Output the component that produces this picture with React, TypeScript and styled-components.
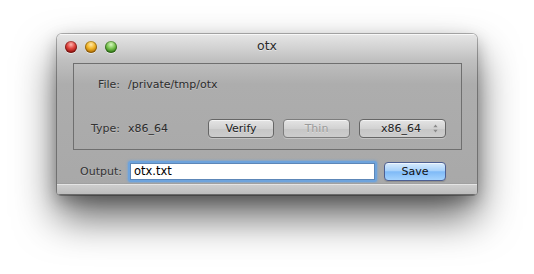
import styled, { createGlobalStyle } from "styled-components";

const GlobalStyle = createGlobalStyle`
  html, body {
    margin: 0;
    padding: 0;
    background: #ffffff;
  }
  body {
    font-family: "DejaVu Sans", "Liberation Sans", sans-serif;
    font-size: 11px;
  }
  * {
    box-sizing: border-box;
  }
`;

const Page = styled.div`
  padding: 34px 0 0 57px;
  height: 274px;
`;

const Window = styled.div`
  width: 420px;
  height: 161px;
  display: flex;
  flex-direction: column;
  border-radius: 5px 5px 4px 4px;
  overflow: hidden;
  background: linear-gradient(
    to bottom,
    #e6e6e6 0px,
    #d2d2d2 14px,
    #c0c0c0 26px,
    #adadad 50px,
    #a8a8a8 100%
  );
  box-shadow: 0 0 0 1px rgba(0, 0, 0, 0.28), 0 22px 42px rgba(0, 0, 0, 0.62),
    0 6px 16px rgba(0, 0, 0, 0.25);
`;

const TitleBar = styled.div`
  height: 24px;
  flex-shrink: 0;
  display: flex;
  align-items: center;
  position: relative;
  padding-left: 8px;
  gap: 8px;
  box-shadow: inset 0 1px 0 rgba(255, 255, 255, 0.7);
`;

const Light = styled.span<{ $base: string; $dark: string; $hi: string }>`
  width: 12px;
  height: 12px;
  border-radius: 50%;
  margin-top: 1px;
  background: radial-gradient(
    circle at 50% 30%,
    ${(p) => p.$hi} 0px,
    ${(p) => p.$base} 4px,
    ${(p) => p.$dark} 7px
  );
  box-shadow: inset 0 0 0 1px rgba(0, 0, 0, 0.28), 0 1px 0 rgba(255, 255, 255, 0.5);
`;

const Title = styled.div`
  position: absolute;
  left: 0;
  right: 0;
  top: 4px;
  text-align: center;
  font-size: 12.5px;
  color: #2a2a2a;
  text-shadow: 0 1px 0 rgba(255, 255, 255, 0.5);
  pointer-events: none;
`;

const Body = styled.div`
  flex: 1;
  padding: 5px 15px 0 16px;
`;

const GroupBox = styled.div`
  height: 87px;
  border: 1px solid #6f6f6f;
  padding: 11px 15px 0 0;
  display: flex;
  flex-direction: column;
`;

const Row = styled.div<{ $top?: number }>`
  display: flex;
  align-items: center;
  height: 18px;
  margin-top: ${(p) => p.$top ?? 0}px;
`;

const Label = styled.span<{ $w: number }>`
  width: ${(p) => p.$w}px;
  text-align: right;
  color: #333;
  flex-shrink: 0;
  text-shadow: 0 1px 0 rgba(255, 255, 255, 0.25);
`;

const Value = styled.span`
  margin-left: 8px;
  color: #2c2c2c;
  text-shadow: 0 1px 0 rgba(255, 255, 255, 0.25);
`;

const Buttons = styled.div`
  margin-left: auto;
  display: flex;
  gap: 9px;
`;

const Button = styled.button<{ $w: number; $disabled?: boolean }>`
  width: ${(p) => p.$w}px;
  height: 19px;
  padding: 0;
  border-radius: 4px;
  font-family: "DejaVu Sans", "Liberation Sans", sans-serif;
  font-size: 11px;
  color: ${(p) => (p.$disabled ? "#9a9a9a" : "#222")};
  border: 1px solid ${(p) => (p.$disabled ? "#7d7d7d" : "#666")};
  background: linear-gradient(to bottom, #e4e4e4 0%, #d2d2d2 50%, #c6c6c6 51%, #cdcdcd 100%);
  box-shadow: inset 0 1px 0 rgba(255, 255, 255, 0.6), 0 1px 0 rgba(255, 255, 255, 0.3);
  text-shadow: 0 1px 0 rgba(255, 255, 255, 0.4);
`;

const PopUp = styled(Button)`
  display: flex;
  align-items: center;
  justify-content: flex-end;
  padding-right: 7px;
  gap: 12px;
`;

const Stepper = styled.svg`
  width: 5px;
  height: 9px;
  display: block;
`;

const OutputRow = styled.div`
  display: flex;
  align-items: center;
  margin-top: 10px;
  height: 22px;
`;

const FieldRing = styled.div`
  margin-left: 6px;
  width: 249px;
  height: 21px;
  border-radius: 3px;
  padding: 2px;
  background: #6ea3dc;
  box-shadow: 0 0 2px 1px rgba(110, 163, 220, 0.6);
`;

const Field = styled.input`
  width: 100%;
  height: 100%;
  border: 1px solid #5d87b8;
  background: #fff;
  font-family: "DejaVu Sans", "Liberation Sans", sans-serif;
  font-size: 11.5px;
  color: #000;
  padding: 0 0 0 3px;
  outline: none;
`;

const SaveButton = styled.button`
  margin-left: 7px;
  width: 62px;
  height: 19px;
  padding: 0;
  border-radius: 4px;
  border: 1px solid #4d5f92;
  font-family: "DejaVu Sans", "Liberation Sans", sans-serif;
  font-size: 11px;
  color: #111;
  background: linear-gradient(
    to bottom,
    #d7ebfd 0%,
    #a9d2fb 45%,
    #7fbaf7 52%,
    #a5d3fd 100%
  );
  box-shadow: inset 0 1px 0 rgba(255, 255, 255, 0.6), 0 1px 1px rgba(0, 0, 0, 0.15);
`;

const BottomBar = styled.div`
  height: 12px;
  flex-shrink: 0;
  background: linear-gradient(to bottom, #cfcfcf, #bdbdbd);
  border-top: 1px solid #a0a0a0;
  border-bottom: 1px solid #6a6a6a;
  box-shadow: inset 0 1px 0 rgba(255, 255, 255, 0.45);
`;

export default function App() {
  return (
    <>
      <GlobalStyle />
      <Page>
        <Window>
          <TitleBar>
            <Light $base="#e0453f" $dark="#a51d18" $hi="#ffb3ae" />
            <Light $base="#f2b629" $dark="#c07d0a" $hi="#ffe9a8" />
            <Light $base="#7cc653" $dark="#3f8a21" $hi="#d6f7c0" />
            <Title>otx</Title>
          </TitleBar>
          <Body>
            <GroupBox>
              <Row>
                <Label $w={46}>File:</Label>
                <Value>/private/tmp/otx</Value>
              </Row>
              <Row $top={26}>
                <Label $w={46}>Type:</Label>
                <Value>x86_64</Value>
                <Buttons>
                  <Button $w={66}>Verify</Button>
                  <Button $w={67} $disabled>
                    Thin
                  </Button>
                  <PopUp $w={87}>
                    <span>x86_64</span>
                    <Stepper viewBox="0 0 5 9">
                      <path d="M2.5 0.5 L4.6 3.3 L0.4 3.3 Z" fill="#8a8a8a" />
                      <path d="M2.5 8.5 L4.6 5.7 L0.4 5.7 Z" fill="#8a8a8a" />
                    </Stepper>
                  </PopUp>
                </Buttons>
              </Row>
            </GroupBox>
            <OutputRow>
              <Label $w={49}>Output:</Label>
              <FieldRing>
                <Field defaultValue="otx.txt" />
              </FieldRing>
              <SaveButton>Save</SaveButton>
            </OutputRow>
          </Body>
          <BottomBar />
        </Window>
      </Page>
    </>
  );
}
